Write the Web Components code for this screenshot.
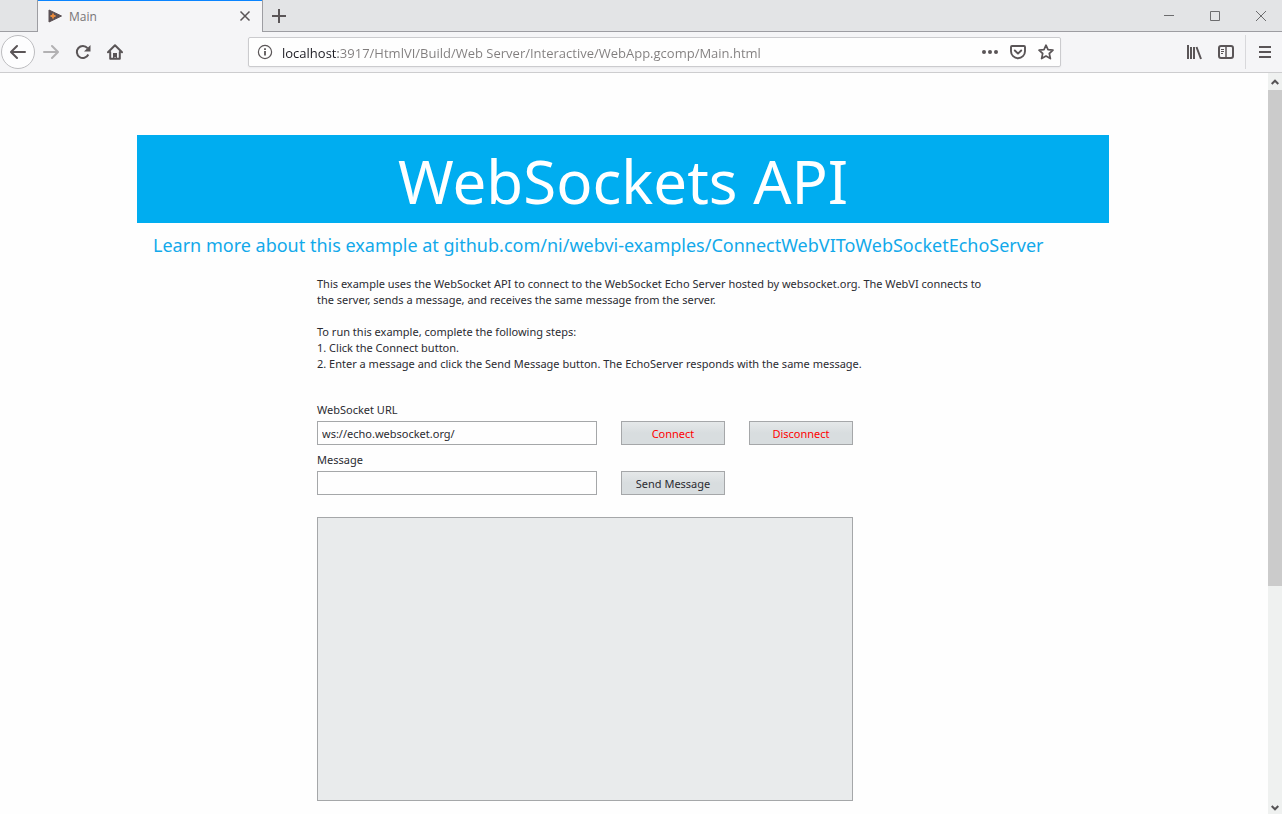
<!DOCTYPE html>
<html lang="en">
<head>
<meta charset="utf-8">
<title>Main</title>
<style>
  html, body { margin: 0; height: 100%; }
  body { font-family: "Noto Sans", "Open Sans", sans-serif; background: #fefefe; overflow: hidden; }
</style>
</head>
<body>
<browser-window>
  <tab-strip slot="tabs"></tab-strip>
  <nav-toolbar slot="toolbar"></nav-toolbar>
  <web-app></web-app>
</browser-window>

<script>
const define = (name, html, setup) => {
  const template = document.createElement('template');
  template.innerHTML = html;
  customElements.define(name, class extends HTMLElement {
    constructor() {
      super();
      this.attachShadow({ mode: 'open' }).append(template.content.cloneNode(true));
    }
    connectedCallback() {
      if (setup) setup(this, this.shadowRoot);
    }
  });
};

/* Flat button that carries one icon */
define('icon-button', `
<style>
  :host { display: block; flex: none; width: 32px; height: 32px; }
  :host([round]) { width: 34px; height: 34px; }
  :host([small]) { width: 28px; height: 28px; }
  button { box-sizing: border-box; display: grid; place-items: center; width: 100%; height: 100%;
    margin: 0; padding: 0; border: 0; background: none; color: inherit; }
  :host([round]) button { border: 1px solid #bdbdc0; border-radius: 50%; background: #fdfdfe; }
</style>
<button type="button"><slot></slot></button>`,
(host, root) => root.querySelector('button').setAttribute('aria-label', host.getAttribute('name')));

define('tab-strip', `
<style>
  :host { display: flex; height: 32px; background: #e3e4e6; color: #5a5557; }
  .edge, .rest { box-sizing: border-box; border-bottom: 1px solid #9d9da2; }
  .edge { width: 37px; }
  .rest { flex: 1; display: flex; align-items: center; justify-content: space-between; }
  .tab { box-sizing: border-box; width: 226px; display: flex; align-items: center;
    padding: 0 1px 0 10px; background: #f5f5f7;
    border: solid #9d9da2; border-width: 0 1px; box-shadow: inset 0 1px #0a84ff; }
  .tab span { flex: 1; padding: 2px 0 0 7px; font: 12px/16px "Open Sans", sans-serif; color: #777476; }
  .window { display: flex; gap: 14px; color: #6c6c6e; padding-right: 5px; }
  svg { display: block; fill: none; stroke: currentColor; }
</style>
<div class="edge"></div>
<div class="tab">
  <svg width="14" height="14" viewBox="0 0 14 14"><path d="M1 1v12L13.500 7z" fill="#5a5054" stroke="#5a5054" stroke-linejoin="round"/><path d="M2.500 7h5M5 4.500v5" stroke="#e98b3d" stroke-width="1.800"/></svg>
  <span>Main</span>
  <icon-button name="Close tab"><svg width="12" height="12" viewBox="0 0 12 12" stroke-width="1.5"><path d="M1.500 1.500l9 9M10.500 1.500l-9 9"/></svg></icon-button>
</div>
<div class="rest">
  <icon-button name="New tab"><svg width="14" height="14" viewBox="0 0 14 14" stroke-width="2"><path d="M0 7h14M7 0v14"/></svg></icon-button>
  <div class="window">
    <icon-button name="Minimize"><svg width="10" height="10" viewBox="0 0 10 10"><path d="M0 4.500h10"/></svg></icon-button>
    <icon-button name="Maximize"><svg width="10" height="10" viewBox="0 0 10 10"><path d="M.5 .5h9v9h-9z"/></svg></icon-button>
    <icon-button name="Close"><svg width="10" height="10" viewBox="0 0 10 10"><path d="M0 0l10 10M10 0L0 10"/></svg></icon-button>
  </div>
</div>`);

define('address-bar', `
<style>
  :host { box-sizing: border-box; display: flex; align-items: center; height: 30px; padding: 0 0 0 8px;
    background: #fefefe; border: 1px solid #cbcbce; border-radius: 2px; box-shadow: 0 1px 2px #0000000d; color: #5a5557; }
  input { box-sizing: border-box; flex: 1; min-width: 0; height: 28px; margin: 0 0 0 9px; padding: 2px 0 0; border: 0; outline: 0;
    font: 13px/26px "Open Sans", sans-serif;
    background: linear-gradient(to right, #1c1b22 56px, #807d7d 56px);
    -webkit-background-clip: text; background-clip: text; -webkit-text-fill-color: transparent; }
  svg { display: block; fill: none; stroke: currentColor; }
</style>
<svg width="16" height="16" viewBox="0 0 16 16"><circle cx="8" cy="8" r="6.600" stroke-width="1.200"/><path d="M8 7v4.500M8 4.200v1.800" stroke-width="1.800"/></svg>
<input type="text" aria-label="Address" value="localhost:3917/HtmlVI/Build/Web Server/Interactive/WebApp.gcomp/Main.html">
<icon-button small name="Page actions"><svg width="16" height="16" viewBox="0 0 16 16" style="fill:currentColor;stroke:none"><circle cx="2" cy="8" r="2"/><circle cx="8" cy="8" r="2"/><circle cx="14" cy="8" r="2"/></svg></icon-button>
<icon-button small name="Save to Pocket"><svg width="16" height="16" viewBox="0 0 16 16" stroke-width="1.900" stroke-linecap="round" stroke-linejoin="round"><path d="M2 2h12a1 1 0 0 1 1 1v4.200a7 7 0 0 1-14 0V3a1 1 0 0 1 1-1z"/><path d="M4.800 6.500L8 9.600l3.200-3.100"/></svg></icon-button>
<icon-button small name="Bookmark this page"><svg width="16" height="16" viewBox="0 0 16 16" stroke-width="1.700" stroke-linejoin="round"><path d="M8 1.200l2 4.500 5 .5-3.700 3.300 1.100 5.100L8 12l-4.400 2.600 1.100-5.100L1 6.200l5-.5z"/></svg></icon-button>`);

define('nav-toolbar', `
<style>
  :host { box-sizing: border-box; display: flex; align-items: center; height: 41px; padding: 0 1px;
    background: #f5f5f7; border-bottom: 1px solid #cdcdcf; color: #5a5557; }
  .space { flex: 117; }
  address-bar { flex: 803; }
  .line { width: 1px; height: 34px; margin: 0 3px; background: #d8d8db; }
  .off { color: #b2b1b3; }
  svg { display: block; fill: none; stroke: currentColor; stroke-width: 2; }
</style>
<icon-button round name="Back"><svg width="16" height="16" viewBox="0 0 16 16" stroke-linecap="round" stroke-linejoin="round"><path d="M15 8H1.500M7 2L1 8l6 6"/></svg></icon-button>
<icon-button class="off" name="Forward"><svg width="16" height="16" viewBox="0 0 16 16" stroke-linecap="round" stroke-linejoin="round"><path d="M1 8h13.500M9 2l6 6-6 6"/></svg></icon-button>
<icon-button name="Reload"><svg width="16" height="16" viewBox="0 0 16 16"><path d="M13.300 10.500A6 6 0 1 1 12.500 4.200"/><path d="M15.500 1v6.500H9z" fill="currentColor" stroke="none"/></svg></icon-button>
<icon-button name="Home"><svg width="16" height="16" viewBox="0 0 16 16" stroke-linejoin="round" stroke-linecap="round"><path d="M1 8.300L8 1.300l7 7M3.200 8v6.800h9.600V8"/><path d="M6 15V9h4v6H8.700v-2H7.500v2z" fill="currentColor" stroke="none"/></svg></icon-button>
<div class="space"></div>
<address-bar></address-bar>
<div class="space"></div>
<icon-button name="Library"><svg width="16" height="16" viewBox="0 0 16 16"><path d="M2 1v14M5 3v12M8 3v12M10.500 3l4.500 12"/></svg></icon-button>
<icon-button name="Sidebars"><svg width="16" height="16" viewBox="0 0 16 16"><rect x="1" y="2" width="14" height="12" rx="2"/><path d="M8 2v12" stroke-width="1.500"/><path d="M3 5.500h3M3 7.500h3M3 9.500h2" style="stroke-width:1"/></svg></icon-button>
<div class="line"></div>
<icon-button name="Open menu"><svg width="16" height="16" viewBox="0 0 16 16"><path d="M2 3h12M2 8h12M2 13h12"/></svg></icon-button>`);

define('scroll-rail', `
<style>
  :host { display: flex; flex-direction: column; flex: none; width: 14px; background: #eff1f0; color: #555355; }
  button { display: grid; place-items: center; height: 17px; margin: 0; padding: 0; border: 0; background: none; color: inherit; }
  .down { height: 13px; }
  .thumb { flex: 496; background: #cbcbcb; }
  .track { flex: 215; }
  svg { display: block; fill: none; stroke: currentColor; stroke-width: 2; }
</style>
<button type="button" aria-label="Scroll up"><svg width="8" height="6" viewBox="0 0 8 6"><path d="M.7 5L4 1.700 7.300 5"/></svg></button>
<div class="thumb"></div>
<div class="track"></div>
<button class="down" type="button" aria-label="Scroll down"><svg width="8" height="6" viewBox="0 0 8 6"><path d="M.7 1L4 4.300 7.300 1"/></svg></button>`);

define('browser-window', `
<style>
  :host { display: flex; flex-direction: column; height: 100vh; }
  .view { flex: 1; min-height: 0; display: flex; }
  .page { flex: 1; min-width: 0; overflow: hidden; }
</style>
<slot name="tabs"></slot>
<slot name="toolbar"></slot>
<div class="view">
  <div class="page"><slot></slot></div>
  <scroll-rail></scroll-rail>
</div>`);

define('page-banner', `
<style>
  :host { display: block; background: #00adf0; color: #fff; text-align: center; }
  h1 { margin: 0; padding-top: 4px; font: inherit; font-size: 60px; line-height: 84px; }
</style>
<h1><slot></slot></h1>`);

define('text-field', `
<style>
  :host { display: flex; flex-direction: column; gap: 2px; }
  label { line-height: 18px; }
  input { box-sizing: border-box; width: 100%; height: 24px; margin: 0; padding: 0 4px;
    border: 1px solid #a5a7a9; border-radius: 0; outline: 0; background: #fefefe; color: inherit;
    font: inherit; }
</style>
<label for="field"></label>
<input id="field" type="text">`,
(host, root) => {
  root.querySelector('label').textContent = host.getAttribute('label');
  root.querySelector('input').value = host.getAttribute('value') || '';
});

define('push-button', `
<style>
  :host { display: block; align-self: end; }
  button { box-sizing: border-box; width: 100%; height: 24px; margin: 0; padding: 1px 0 0;
    border: 1px solid #a5a7a9; border-radius: 0; color: inherit; font: inherit;
    background: linear-gradient(#e5e8e9, #d8dddf 50%); }
</style>
<button type="button"><slot></slot></button>`);

define('message-log', `
<style>
  :host { display: block; }
  textarea { box-sizing: border-box; display: block; width: 100%; height: 284px; margin: 0; padding: 4px;
    border: 1px solid #a5a7a9; border-radius: 0; outline: 0; resize: none; background: #e9ebec; color: inherit; font: inherit; }
</style>
<textarea readonly aria-label="Received messages"></textarea>`);

define('web-app', `
<style>
  :host { display: block; padding: 62px 0 0 137px; color: #2b2b31; font-size: 11px; line-height: 16px; }
  main { max-width: 972px; }
  .more { display: block; margin: 7px 16px 16px; font-size: 18px; line-height: 30px; color: #12a9ea;
    text-decoration: none; white-space: nowrap; }
  .body { margin-left: 180px; }
  p { margin: 0; }
  .intro { margin-bottom: 16px; }
  form { display: grid; grid-template-columns: minmax(0, 280px) 104px 104px; column-gap: 24px; row-gap: 6px; margin-top: 29px; }
  message-log { grid-column: 1 / -1; margin-top: 16px; }
  .alert { color: #f00; }
  .second { grid-column: 1; }
</style>
<main>
  <page-banner>WebSockets API</page-banner>
  <a class="more" href="#example">Learn more about this example at github.com/ni/webvi-examples/ConnectWebVIToWebSocketEchoServer</a>
  <div class="body">
    <p class="intro">This example uses the WebSocket API to connect to the WebSocket Echo Server hosted by websocket.org. The WebVI connects to<br>the server, sends a message, and receives the same message from the server.</p>
    <p>To run this example, complete the following steps:</p>
    <p>1. Click the Connect button.</p>
    <p>2. Enter a message and click the Send Message button. The EchoServer responds with the same message.</p>
    <form>
      <text-field label="WebSocket URL" value="ws://echo.websocket.org/"></text-field>
      <push-button class="alert">Connect</push-button>
      <push-button class="alert">Disconnect</push-button>
      <text-field class="second" label="Message"></text-field>
      <push-button>Send Message</push-button>
      <message-log></message-log>
    </form>
  </div>
</main>`);
</script>
</body>
</html>
